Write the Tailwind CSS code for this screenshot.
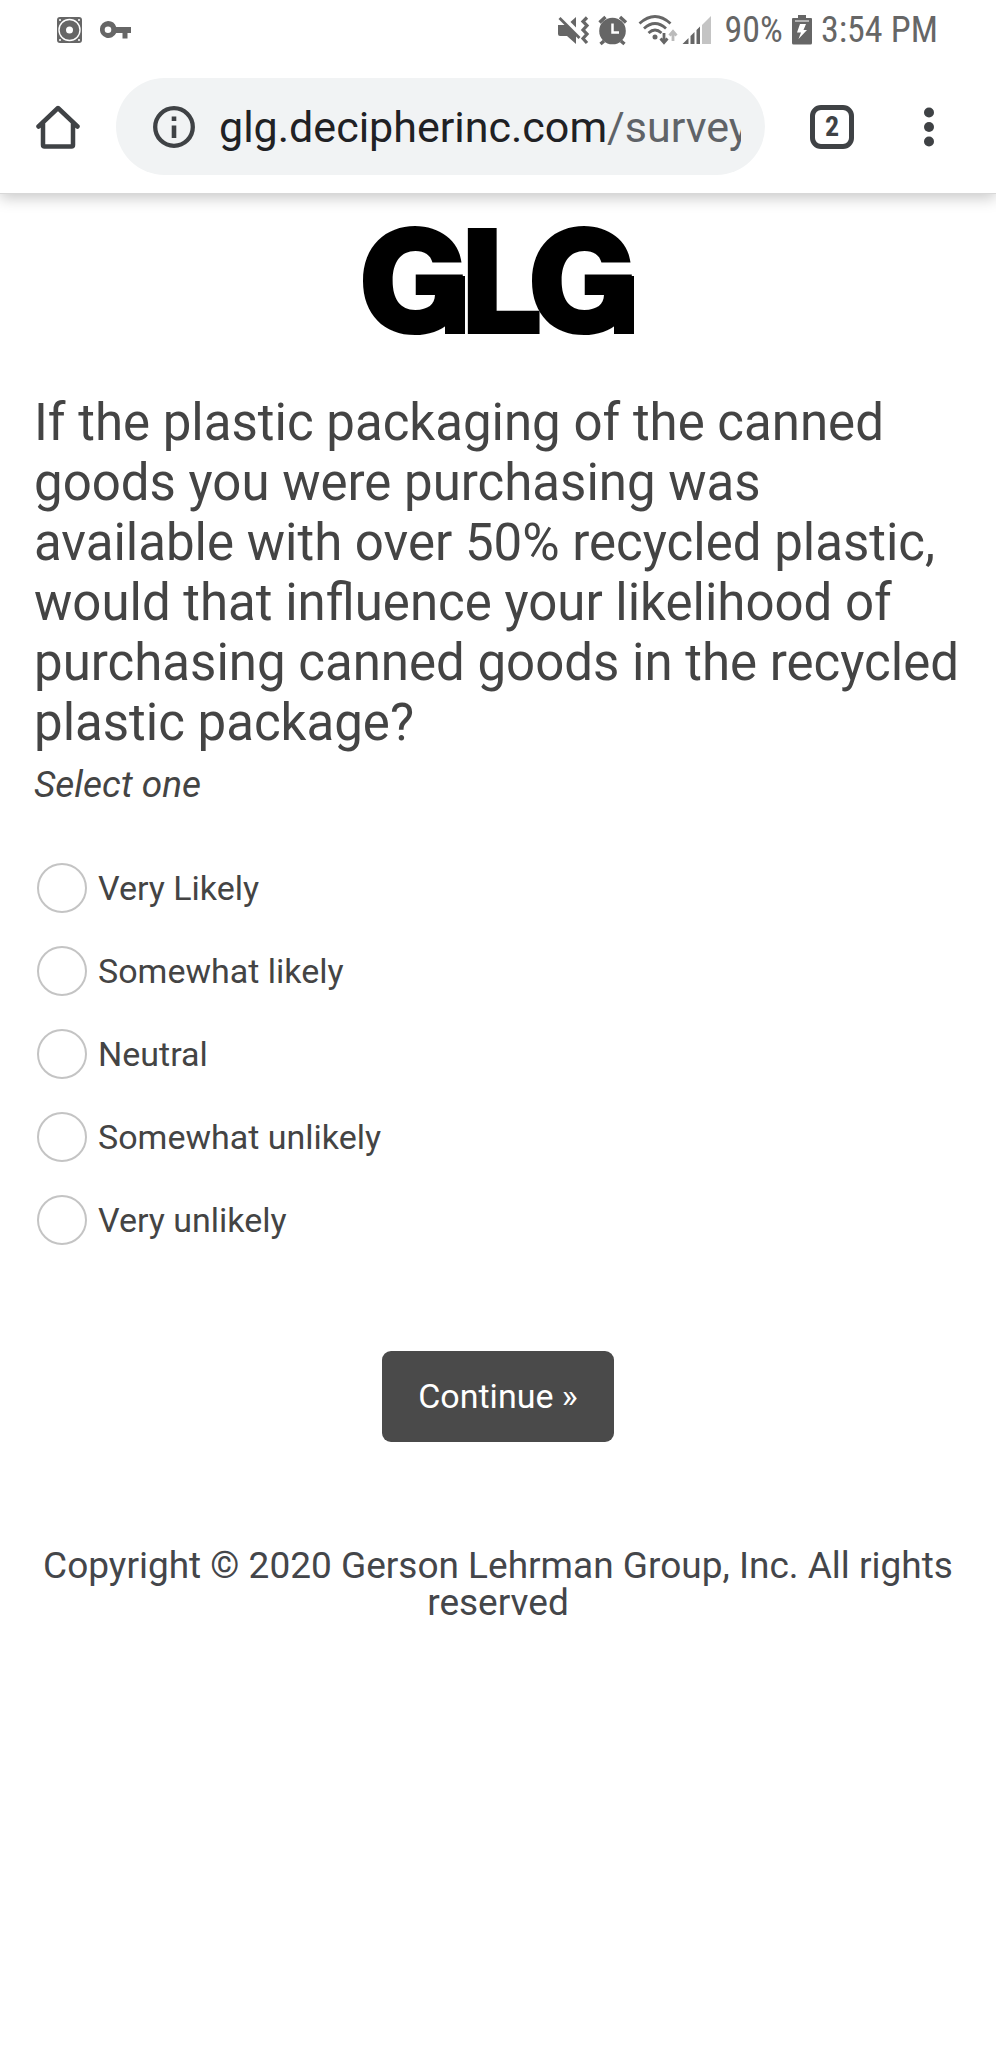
<!DOCTYPE html>
<html lang="en">
<head>
<meta charset="utf-8">
<meta name="viewport" content="width=device-width, initial-scale=1">
<title>Survey</title>
<script src="https://cdn.jsdelivr.net/npm/@tailwindcss/browser@4"></script>
</head>
<body class="min-h-screen bg-white font-['Roboto',sans-serif] text-[#444444]">
<header class="relative z-10 bg-white border-b border-[#d8d8d8] shadow-[0_4px_14px_rgba(0,0,0,0.22)]">
  <div class="flex h-[60px] items-center justify-between pl-14 pr-[58px] text-[#666666]">
    <div class="flex items-center gap-4">
      <svg class="h-[26px] w-[28px]" viewBox="0 0 28 26" aria-hidden="true">
        <rect x="1" y="0" width="25" height="26" rx="3" fill="#666"/>
        <circle cx="13.500" cy="13" r="10.500" fill="none" stroke="#fff" stroke-width="1.400"/>
        <circle cx="13.500" cy="13" r="3.500" fill="#fff"/>
        <g fill="#fff"><circle cx="4" cy="3" r="1"/><circle cx="23" cy="3" r="1"/><circle cx="4" cy="23" r="1"/><circle cx="23" cy="23" r="1"/></g>
      </svg>
      <svg class="h-[18px] w-[32px]" viewBox="0 0 32 18" aria-hidden="true">
        <path fill="#666" fill-rule="evenodd" d="M8 0a8.500 8.500 0 0 1 8.200 6H31v6h-3.500v5.500h-5V12h-6.300A8.500 8.500 0 1 1 8 0Zm0 5.500a3.300 3.300 0 1 0 0 6.600 3.300 3.300 0 0 0 0-6.600Z"/>
      </svg>
    </div>
    <div class="flex items-center gap-[9px]">
      <svg class="h-[32px] w-[156px]" viewBox="554 13 156 32" aria-hidden="true">
        <g fill="#666">
          <path d="M556 24h9l9-8v27l-9-8h-7q-2 0-2-2Z"/>
          <path d="M558 14l22 22" stroke="#fff" stroke-width="5"/>
          <path d="M557.500 17l20 20" stroke="#666" stroke-width="2.800"/>
          <path d="M585 16.500l-4 4 4 4-4 4.500 4 4-4 4.500 4 4.500" fill="none" stroke="#666" stroke-width="3.200"/>
          <circle cx="610.500" cy="30" r="13.300"/>
          <path d="M597.500 21.500l6-5.500M624 21.500l-6-5.500M602 40l-3.500 3M619 40l3.500 3" stroke="#666" stroke-width="3.400"/>
          <path d="M610.500 22.500v9h6.500" fill="none" stroke="#fff" stroke-width="2.500"/>
          <circle cx="653" cy="36" r="2.500"/>
        </g>
        <g fill="none" stroke="#666" stroke-width="2.800">
          <path d="M637.500 22.500q15.500-14 31 0M642 27.500q11-10 22 0M646.500 32q6.500-6 13 0"/>
          <path d="M662 32v9M658.500 37.500l3.500 4 3.500-4"/>
          <path d="M671 40v-8.500M667.500 34.500l3.500-4 3.500 4" stroke="#bbb"/>
        </g>
        <path d="M680.500 43l6-6v6ZM688.500 35l4-4v12h-4ZM694.500 29l3.500-3.500V43h-3.500Z" fill="#666"/>
        <path d="M700 24l9-9v28h-9Z" fill="#c4c4c4"/>
      </svg>
      <span class="ml-1 text-[36px] leading-10 font-['Roboto_Condensed','Roboto',sans-serif]">90%</span>
      <svg class="h-[30px] w-[20px]" viewBox="0 0 20 30" aria-hidden="true">
        <path d="M6 0h8v3h5q1 0 1 1v24q0 1.500-1.500 1.500h-17Q0 29.500 0 28V4q0-1 1-1h5Z" fill="#666"/>
        <path d="M3 6h14" stroke="#fff"/>
        <path d="M8 9h6l-2.500 6H15L6.500 24 9 17.500H5Z" fill="#fff"/>
      </svg>
      <time class="text-[36px] leading-10 font-['Roboto_Condensed','Roboto',sans-serif]">3:54 PM</time>
    </div>
  </div>
  <div class="flex h-[133px] items-center pr-14 pl-9">
    <button type="button" aria-label="Home" class="shrink-0">
      <svg class="h-[44px] w-[44px]" viewBox="0 0 44 44" fill="none" stroke="#3f4245" stroke-width="4.500" stroke-linecap="round" stroke-linejoin="round"><path d="M2.500 21.500L22 3l19.500 18.500M7 18.500v21.500q0 1.500 1.500 1.500h27q1.500 0 1.500-1.500V18.500"/></svg>
    </button>
    <div class="ml-9 flex h-[97px] min-w-0 flex-1 items-center rounded-full bg-[#f1f3f4] pr-6 pl-[37px]">
      <svg class="h-[42px] w-[42px] shrink-0" viewBox="0 0 42 42" aria-hidden="true"><circle cx="21" cy="21" r="18.800" fill="none" stroke="#3f4245" stroke-width="4.300"/><path d="M18.700 10.500h4.600v4.500h-4.600ZM18.700 19.500h4.600V32h-4.600Z" fill="#3f4245"/></svg>
      <a href="#" class="ml-6 min-w-0 flex-1 overflow-hidden text-[43px] leading-[56px] whitespace-nowrap text-[#202124]">glg.decipherinc.com<span class="text-[#5f6368]">/survey</span></a>
    </div>
    <button type="button" aria-label="2 open tabs" class="ml-[45px] flex h-[44px] w-[44px] shrink-0 items-center justify-center rounded-[11px] border-[5px] border-[#3f4245] font-['Roboto_Condensed','Roboto',sans-serif] text-[28px] leading-8 font-bold text-[#3f4245]">2</button>
    <button type="button" aria-label="Menu" class="ml-16 shrink-0">
      <svg class="h-[40px] w-[22px]" viewBox="0 0 22 40" fill="#3f4245"><circle cx="11" cy="5.500" r="5"/><circle cx="11" cy="20" r="5"/><circle cx="11" cy="34.500" r="5"/></svg>
    </button>
  </div>
</header>
<main class="px-[34px] pt-[33px]">
  <svg class="mx-auto h-[110px] w-[271px] overflow-visible" viewBox="0 0 271 110" role="img" aria-label="GLG">
    <g class="font-['Inter',sans-serif] text-[146px] font-black" fill="#000">
      <text x="-5" y="107">G</text><text x="98" y="107">L</text><text x="164" y="107">G</text>
      <rect x="82" y="49" width="20" height="58"/><rect x="251" y="49" width="20" height="58"/>
    </g>
  </svg>
  <form>
    <h1 id="question" class="mt-14 text-[51px] leading-[60px]">If the plastic packaging of the canned goods you were purchasing was available with over 50% recycled plastic, would that influence your likelihood of purchasing canned goods in the recycled plastic package?</h1>
    <p class="mt-[10px] text-[37px] leading-[44px] italic">Select one</p>
    <div role="radiogroup" aria-labelledby="question" class="mt-[56px] flex flex-col gap-[33px] pl-[3px] text-[34px] leading-[50px]">
      <label class="flex items-center gap-[11px]"><input type="radio" name="answer" class="h-[50px] w-[50px] shrink-0 appearance-none rounded-full border-2 border-[#c4c4c4] checked:bg-[#4a4a4a]">Very Likely</label>
      <label class="flex items-center gap-[11px]"><input type="radio" name="answer" class="h-[50px] w-[50px] shrink-0 appearance-none rounded-full border-2 border-[#c4c4c4] checked:bg-[#4a4a4a]">Somewhat likely</label>
      <label class="flex items-center gap-[11px]"><input type="radio" name="answer" class="h-[50px] w-[50px] shrink-0 appearance-none rounded-full border-2 border-[#c4c4c4] checked:bg-[#4a4a4a]">Neutral</label>
      <label class="flex items-center gap-[11px]"><input type="radio" name="answer" class="h-[50px] w-[50px] shrink-0 appearance-none rounded-full border-2 border-[#c4c4c4] checked:bg-[#4a4a4a]">Somewhat unlikely</label>
      <label class="flex items-center gap-[11px]"><input type="radio" name="answer" class="h-[50px] w-[50px] shrink-0 appearance-none rounded-full border-2 border-[#c4c4c4] checked:bg-[#4a4a4a]">Very unlikely</label>
    </div>
    <button type="button" class="mx-auto mt-[106px] block rounded-[9px] bg-[#4a4a4a] px-9 py-5 text-[34px] leading-[51px] text-white">Continue »</button>
  </form>
</main>
<footer class="mt-[105px] px-9 text-center text-[37px] leading-[37px] text-[#44464a]">Copyright © 2020 Gerson Lehrman Group, Inc. All rights reserved</footer>
</body>
</html>
